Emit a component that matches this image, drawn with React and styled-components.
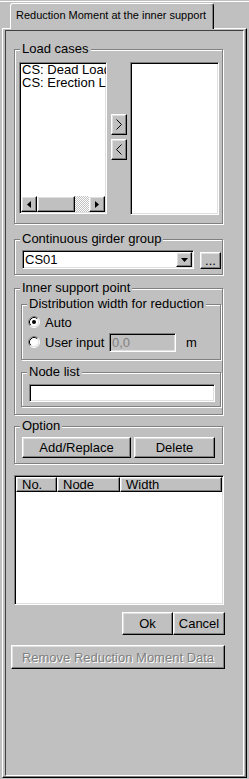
import styled, { createGlobalStyle, css } from "styled-components";

const GlobalStyle = createGlobalStyle`
  html, body {
    margin: 0;
    padding: 0;
    background: #c0c0c0;
  }
  body {
    font-family: "Liberation Sans", Arial, sans-serif;
    font-size: 13px;
    color: #000;
  }
`;

const raised = css`
  border: 1px solid;
  border-color: #fff #000 #000 #fff;
  box-shadow: inset -1px -1px 0 #808080, inset 1px 1px 0 #dfdfdf;
`;

const sunken = css`
  border: 1px solid;
  border-color: #808080 #fff #fff #808080;
  box-shadow: inset 1px 1px 0 #000, inset -1px -1px 0 #dfdfdf;
`;

const Window = styled.div`
  width: 249px;
  height: 779px;
  padding-top: 1px;
  box-sizing: border-box;
  background: #c0c0c0;
  overflow: hidden;
`;

const TabStrip = styled.div`
  display: flex;
  align-items: flex-start;
  height: 26px;
  padding-left: 10px;
  border-top: 1px solid #fff;
`;

const Tab = styled.div`
  position: relative;
  z-index: 1;
  box-sizing: border-box;
  width: 204px;
  height: 26px;
  margin-top: 1px;
  padding: 5px 0 0 5px;
  background: #c0c0c0;
  border-top: 1px solid #fff;
  border-left: 1px solid #fff;
  border-right: 1px solid #000;
  border-radius: 3px 3px 0 0;
  box-shadow: inset -1px 0 0 #808080;
  font-size: 11px;
  line-height: 13px;
  white-space: nowrap;
`;

const Panel = styled.div`
  box-sizing: border-box;
  margin-left: 2px;
  width: 245px;
  height: 750px;
  padding: 1px 2px;
  border: 1px solid;
  border-color: #fff #000 #000 #fff;
  box-shadow: inset -1px -1px 0 #808080;
`;

const Frame = styled.div`
  box-sizing: border-box;
  height: 100%;
  display: flex;
  flex-direction: column;
  align-items: flex-start;
  padding: 11px 0 0 8px;
  border: 1px solid;
  border-color: #404040 #fff #fff #404040;
`;

const Group = styled.fieldset`
  box-sizing: border-box;
  min-width: 0;
  width: ${(p) => p.$w}px;
  margin: ${(p) => p.$mt || 0}px 0 0 ${(p) => p.$ml || 0}px;
  padding: ${(p) => p.$pt}px 0 ${(p) => p.$pb}px 0;
  border: 1px solid #808080;
  box-shadow: 1px 1px 0 #fff, inset 1px 1px 0 #fff;
`;

const Caption = styled.legend`
  margin-left: 5px;
  padding: 0 2px;
  font-size: 13px;
  line-height: 14px;
  background: #c0c0c0;
  white-space: nowrap;
`;

const Row = styled.div`
  display: flex;
  align-items: ${(p) => p.$align || "flex-start"};
  padding-left: ${(p) => p.$pl || 0}px;
`;

const ListBox = styled.div`
  box-sizing: border-box;
  width: ${(p) => p.$w}px;
  height: ${(p) => p.$h}px;
  ${sunken};
  background: #fff;
  display: flex;
  flex-direction: column;
  overflow: hidden;
`;

const Items = styled.div`
  flex: 1;
  padding: 0 0 0 2px;
  overflow: hidden;
`;

const Item = styled.div`
  line-height: 13px;
  white-space: nowrap;
`;

const ScrollBar = styled.div`
  display: flex;
  height: 16px;
  margin: 0 1px 1px 1px;
`;

const ScrollBtn = styled.div`
  box-sizing: border-box;
  width: 16px;
  height: 16px;
  ${raised};
  background: #c0c0c0;
  display: flex;
  align-items: center;
  justify-content: center;
`;

const Thumb = styled.div`
  box-sizing: border-box;
  width: 38px;
  height: 16px;
  ${raised};
  background: #c0c0c0;
`;

const Track = styled.div`
  flex: 1;
  background: repeating-conic-gradient(#fff 0 25%, #c0c0c0 0 50%) 0 0 / 2px 2px;
`;

const MoveCol = styled.div`
  display: flex;
  flex-direction: column;
  gap: 4px;
  margin: 52px 3px 0 4px;
`;

const Btn = styled.button`
  box-sizing: border-box;
  width: ${(p) => p.$w}px;
  height: ${(p) => p.$h}px;
  margin: 0 0 0 ${(p) => p.$ml || 0}px;
  padding: 0;
  ${raised};
  background: #c0c0c0;
  font-family: "Liberation Sans", Arial, sans-serif;
  font-size: 13px;
  color: #000;
  display: flex;
  align-items: center;
  justify-content: center;
  white-space: nowrap;

  &:disabled {
    color: #808080;
    text-shadow: 1px 1px 0 #fff;
  }
`;

const Combo = styled.div`
  box-sizing: border-box;
  width: 172px;
  height: 19px;
  ${sunken};
  background: #fff;
  display: flex;
  align-items: stretch;
  padding: 1px;
`;

const ComboText = styled.div`
  flex: 1;
  padding-left: 1px;
  line-height: 15px;
`;

const DropBtn = styled.div`
  box-sizing: border-box;
  width: 16px;
  ${raised};
  background: #c0c0c0;
  display: flex;
  align-items: center;
  justify-content: center;
`;

const RadioRow = styled.div`
  display: flex;
  align-items: center;
  height: 20px;
  padding-left: 6px;
`;

const RadioLabel = styled.span`
  margin-left: 5px;
  width: ${(p) => (p.$w ? `${p.$w}px` : "auto")};
  white-space: nowrap;
`;

const Field = styled.div`
  box-sizing: border-box;
  width: ${(p) => p.$w}px;
  height: ${(p) => p.$h}px;
  margin-left: ${(p) => p.$ml || 0}px;
  ${sunken};
  background: ${(p) => (p.$disabled ? "#c0c0c0" : "#fff")};
  color: ${(p) => (p.$disabled ? "#808080" : "#000")};
  padding-left: 2px;
  line-height: ${(p) => p.$h - 2}px;
`;

const Unit = styled.span`
  margin-left: 10px;
`;

const ListView = styled.div`
  box-sizing: border-box;
  width: 210px;
  height: 130px;
  margin-top: 11px;
  ${sunken};
  background: #fff;
  padding: 1px;
`;

const Header = styled.div`
  display: flex;
`;

const HeadCell = styled.div`
  box-sizing: border-box;
  width: ${(p) => p.$w}px;
  height: 15px;
  ${raised};
  background: #c0c0c0;
  padding-left: 5px;
  line-height: 13px;
`;

const Actions = styled.div`
  display: flex;
  margin: 7px 0 0 108px;
`;

const RemoveBtn = styled(Btn)`
  margin: 10px 0 0 -3px;
`;

const Chevron = ({ dir }) => (
  <svg width="6" height="11" viewBox="0 0 6 11">
    <polyline
      points={dir === "right" ? "0.5,0.5 5.5,5.5 0.5,10.5" : "5.5,0.5 0.5,5.5 5.5,10.5"}
      fill="none"
      stroke="#000"
      strokeWidth="1"
    />
  </svg>
);

const Triangle = ({ dir }) => {
  const pts = {
    left: "4,0 4,7 0,3.5",
    right: "0,0 0,7 4,3.5",
    down: "0,0 7,0 3.5,4",
  }[dir];
  const w = dir === "down" ? 7 : 4;
  const h = dir === "down" ? 4 : 7;
  return (
    <svg width={w} height={h} viewBox={`0 0 ${w} ${h}`}>
      <polygon points={pts} fill="#000" />
    </svg>
  );
};

const Radio = ({ checked }) => (
  <svg width="12" height="12" viewBox="0 0 12 12">
    <circle cx="6" cy="6" r="5" fill="#fff" />
    <path d="M9.89 2.11 A5.5 5.5 0 0 0 2.11 9.89" fill="none" stroke="#808080" />
    <path d="M2.11 9.89 A5.5 5.5 0 0 0 9.89 2.11" fill="none" stroke="#fff" />
    <path d="M9.18 2.82 A4.5 4.5 0 0 0 2.82 9.18" fill="none" stroke="#000" />
    <path d="M2.82 9.18 A4.5 4.5 0 0 0 9.18 2.82" fill="none" stroke="#dfdfdf" />
    {checked && <circle cx="6" cy="6" r="2" fill="#000" />}
  </svg>
);

const loadCases = ["CS: Dead Load", "CS: Erection Load"];

export default function App() {
  return (
    <>
      <GlobalStyle />
      <Window>
        <TabStrip>
          <Tab>Reduction Moment at the inner support</Tab>
        </TabStrip>
        <Panel>
          <Frame>
            <Group $w={209} $pt={6} $pb={8}>
              <Caption>Load cases</Caption>
              <Row $pl={4}>
                <ListBox $w={88} $h={152}>
                  <Items>
                    {loadCases.map((c) => (
                      <Item key={c}>{c}</Item>
                    ))}
                  </Items>
                  <ScrollBar>
                    <ScrollBtn>
                      <Triangle dir="left" />
                    </ScrollBtn>
                    <Thumb />
                    <Track />
                    <ScrollBtn>
                      <Triangle dir="right" />
                    </ScrollBtn>
                  </ScrollBar>
                </ListBox>
                <MoveCol>
                  <Btn $w={16} $h={21}>
                    <Chevron dir="right" />
                  </Btn>
                  <Btn $w={16} $h={21}>
                    <Chevron dir="left" />
                  </Btn>
                </MoveCol>
                <ListBox $w={89} $h={153} />
              </Row>
            </Group>

            <Group $w={209} $mt={8} $pt={4} $pb={5}>
              <Caption>Continuous girder group</Caption>
              <Row $pl={7} $align="flex-end">
                <Combo>
                  <ComboText>CS01</ComboText>
                  <DropBtn>
                    <Triangle dir="down" />
                  </DropBtn>
                </Combo>
                <Btn $w={21} $h={17} $ml={6}>
                  ...
                </Btn>
              </Row>
            </Group>

            <Group $w={209} $mt={6} $pt={2} $pb={7}>
              <Caption>Inner support point</Caption>
              <Group $w={200} $ml={6} $pt={1} $pb={7}>
                <Caption>Distribution width for reduction</Caption>
                <RadioRow>
                  <Radio checked />
                  <RadioLabel>Auto</RadioLabel>
                </RadioRow>
                <RadioRow>
                  <Radio />
                  <RadioLabel $w={59}>User input</RadioLabel>
                  <Field $w={67} $h={19} $ml={5} $disabled>
                    0,0
                  </Field>
                  <Unit>m</Unit>
                </RadioRow>
              </Group>
              <Group $w={200} $ml={6} $mt={5} $pt={5} $pb={4}>
                <Caption>Node list</Caption>
                <Row $pl={7}>
                  <Field $w={186} $h={18} />
                </Row>
              </Group>
            </Group>

            <Group $w={209} $mt={4} $pt={4} $pb={5}>
              <Caption>Option</Caption>
              <Row $pl={7}>
                <Btn $w={109} $h={21}>
                  Add/Replace
                </Btn>
                <Btn $w={81} $h={21} $ml={3}>
                  Delete
                </Btn>
              </Row>
            </Group>

            <ListView>
              <Header>
                <HeadCell $w={41}>No.</HeadCell>
                <HeadCell $w={63}>Node</HeadCell>
                <HeadCell $w={102}>Width</HeadCell>
              </Header>
            </ListView>

            <Actions>
              <Btn $w={51} $h={23}>
                Ok
              </Btn>
              <Btn $w={52} $h={23}>
                Cancel
              </Btn>
            </Actions>

            <RemoveBtn $w={214} $h={24} disabled>
              Remove Reduction Moment Data
            </RemoveBtn>
          </Frame>
        </Panel>
      </Window>
    </>
  );
}
